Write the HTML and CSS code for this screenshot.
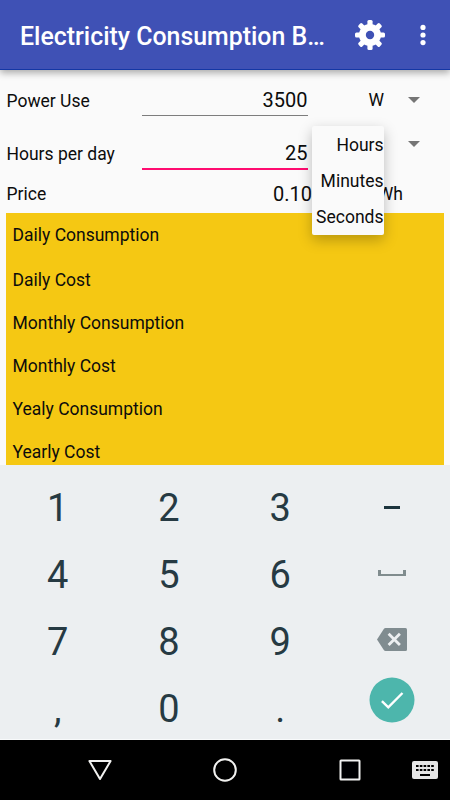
FILE: index.html
```html
<!DOCTYPE html>
<html lang="en">
<head>
    <meta charset="UTF-8">
    <title>Electricity Consumption</title>
    <link rel="stylesheet" href="styles.css">
</head>
<body>
    <header class="app-bar">
        <h1>Electricity Consumption B…</h1>
        <svg class="settings" width="36" height="36" viewBox="0 0 36 36">
            <g fill="#fff">
                <circle cx="18" cy="18" r="11"/>
                <g id="teeth">
                    <rect x="15.4" y="3" width="5.2" height="30" rx="1.5"/>
                    <rect x="3" y="15.4" width="30" height="5.2" rx="1.5"/>
                </g>
                <use href="#teeth" transform="rotate(45 18 18)"/>
            </g>
            <circle class="hole" cx="18" cy="18" r="4.2"/>
        </svg>
        <svg class="overflow" width="8" height="24" viewBox="0 0 8 24">
            <g fill="#fff">
                <circle cx="4" cy="4.4" r="2.6"/>
                <circle cx="4" cy="12" r="2.6"/>
                <circle cx="4" cy="19.6" r="2.6"/>
            </g>
        </svg>
    </header>

    <main class="content">
        <div class="row power">
            <span class="label">Power Use</span>
            <span class="field">3500</span>
            <span class="unit">W</span>
            <span class="arrow"></span>
        </div>
        <div class="row hours">
            <span class="label">Hours per day</span>
            <span class="field active">25</span>
            <span class="unit"></span>
            <span class="arrow"></span>
            <ul class="dropdown">
                <li>Hours</li>
                <li>Minutes</li>
                <li>Seconds</li>
            </ul>
        </div>
        <div class="row price">
            <span class="label">Price</span>
            <span class="amount">0.10</span>
            <span class="per">Wh</span>
        </div>

        <ul class="results">
            <li>Daily Consumption</li>
            <li>Daily Cost</li>
            <li>Monthly Consumption</li>
            <li>Monthly Cost</li>
            <li>Yealy Consumption</li>
            <li>Yearly Cost</li>
        </ul>
    </main>

    <section class="keypad">
        <div class="key">1</div>
        <div class="key">2</div>
        <div class="key">3</div>
        <div class="key"><span class="minus"></span></div>
        <div class="key">4</div>
        <div class="key">5</div>
        <div class="key">6</div>
        <div class="key"><span class="space"></span></div>
        <div class="key">7</div>
        <div class="key">8</div>
        <div class="key">9</div>
        <div class="key backspace">
            <svg width="30" height="23" viewBox="0 0 30 23">
                <path fill="#808c90" d="M8.5 0H28.5Q30 0 30 1.5V21.5Q30 23 28.5 23H8.5Q7.5 23 6.8 22L0 11.5L6.8 1Q7.5 0 8.5 0Z"/>
                <path stroke="#eceff1" stroke-width="2.8" d="M11.6 5.7L22.9 17M22.9 5.7L11.6 17"/>
            </svg>
        </div>
        <div class="key">,</div>
        <div class="key">0</div>
        <div class="key">.</div>
        <div class="key enter">
            <svg width="46" height="46" viewBox="0 0 46 46">
                <circle cx="23" cy="23" r="22.5" fill="#4db6ac"/>
                <path fill="none" stroke="#fff" stroke-width="2.4" d="M12.9 24.2L19.3 30.4L33.5 16"/>
            </svg>
        </div>
    </section>

    <nav class="nav-bar">
        <svg width="450" height="60" viewBox="0 0 450 60">
            <g fill="none" stroke="#f2f2f0" stroke-width="2" stroke-linejoin="round">
                <path d="M89.4 21H110.6L100 39Z"/>
                <circle cx="225" cy="30" r="10.8"/>
                <rect x="340.5" y="20.5" width="19" height="19" rx=".5"/>
            </g>
            <rect x="412" y="21" width="26" height="18" rx="2" fill="#e6e6e6"/>
            <path stroke="#000" stroke-width="2" stroke-dasharray="2.6 1.2" d="M416 26H434.5M416 30H434.5"/>
            <path stroke="#000" stroke-width="2" d="M420 35H430"/>
        </svg>
    </nav>
</body>
</html>
```

FILE: styles.css
```css
* {
    box-sizing: border-box;
}
body {
    margin: 0;
    width: 450px;
    height: 800px;
    display: flex;
    flex-direction: column;
    overflow: hidden;
    font-family: Roboto, sans-serif;
    font-size: 17.5px;
    color: #0c0c0c;
    background-color: #fafafa;
}
ul {
    list-style: none;
    margin: 0;
    padding: 0;
}
svg {
    display: block;
}

/* Top bar */
.app-bar {
    height: 70px;
    display: flex;
    align-items: center;
    padding-left: 20px;
    background-color: #3f51b5;
    border-bottom: 1px solid #1437a5;
    box-shadow: 0 3px 7px rgba(0,0,0,0.32);
}
.app-bar h1 {
    width: 332px;
    margin: 4px 0 0;
    font-size: 24.9px;
    font-weight: 500;
    color: white;
    white-space: nowrap;
}
.settings .hole {
    fill: #3f51b5;
}
.overflow {
    margin-left: 30.5px;
}

/* Form */
.content {
    height: 395px;
    overflow: hidden;
    padding: 0 6px;
}
.app-bar, .keypad {
    flex-shrink: 0;
    position: relative;
}
.row {
    display: flex;
    align-items: center;
    position: relative;
}
.power {
    height: 60px;
}
.hours {
    height: 46px;
}
.price {
    height: 36.5px;
}
.label {
    width: 136px;
    padding-left: 0.5px;
}
.power .label, .hours .label {
    padding-top: 1px;
}
.field {
    width: 166px;
    height: 32px;
    line-height: 32px;
    padding-right: 0.5px;
    font-size: 20px;
    text-align: right;
    border-bottom: 1px solid #7d7d7d;
}
.field.active {
    height: 34px;
    line-height: 34px;
    border-bottom: 2px solid #ff0c70;
}
.unit {
    width: 76px;
    text-align: right;
}
.arrow {
    margin-left: 24px;
    border: 6px solid transparent;
    border-top-color: #757575;
    border-bottom: 0;
}
.hours .arrow {
    align-self: flex-start;
    margin-top: 11px;
}
.amount {
    width: 170px;
    font-size: 20px;
    text-align: right;
}
.per {
    width: 91px;
    text-align: right;
}
.dropdown {
    position: absolute;
    left: 306px;
    top: -4px;
    z-index: 1;
    width: 72px;
    height: 109px;
    background-color: #fafafa;
    border-radius: 2px;
    box-shadow: 0 5px 14px rgba(0,0,0,0.25);
}
.dropdown li {
    height: 36px;
    line-height: 39px;
    padding-right: 0.5px;
    text-align: right;
}

/* Results */
.results {
    height: 253px;
    width: 438px;
    background-color: #f5c813;
}
.results li {
    height: 43px;
    line-height: 45px;
    padding-left: 6.5px;
}
.results li:first-child {
    height: 45.5px;
    line-height: 45.5px;
}

/* Numeric keyboard */
.keypad {
    height: 275px;
    display: grid;
    grid-template-columns: repeat(4, 111.3px);
    grid-auto-rows: 67px;
    padding: 9px 0 0 2px;
    background-color: #eceff1;
    border-bottom: 1px solid #f8fafb;
}
.key {
    display: flex;
    align-items: center;
    justify-content: center;
    font-size: 38px;
    color: #263a43;
}
.minus {
    width: 16px;
    height: 3px;
    margin-bottom: 1px;
    background-color: #1c343d;
}
.space {
    width: 28px;
    height: 6px;
    margin-bottom: 3px;
    border: 2px solid #808c8e;
    border-width: 0 3px 2px;
}
.backspace {
    padding-bottom: 4px;
}
.enter {
    padding-bottom: 17px;
}

/* System navigation */
.nav-bar {
    height: 60px;
    background-color: black;
}
```
